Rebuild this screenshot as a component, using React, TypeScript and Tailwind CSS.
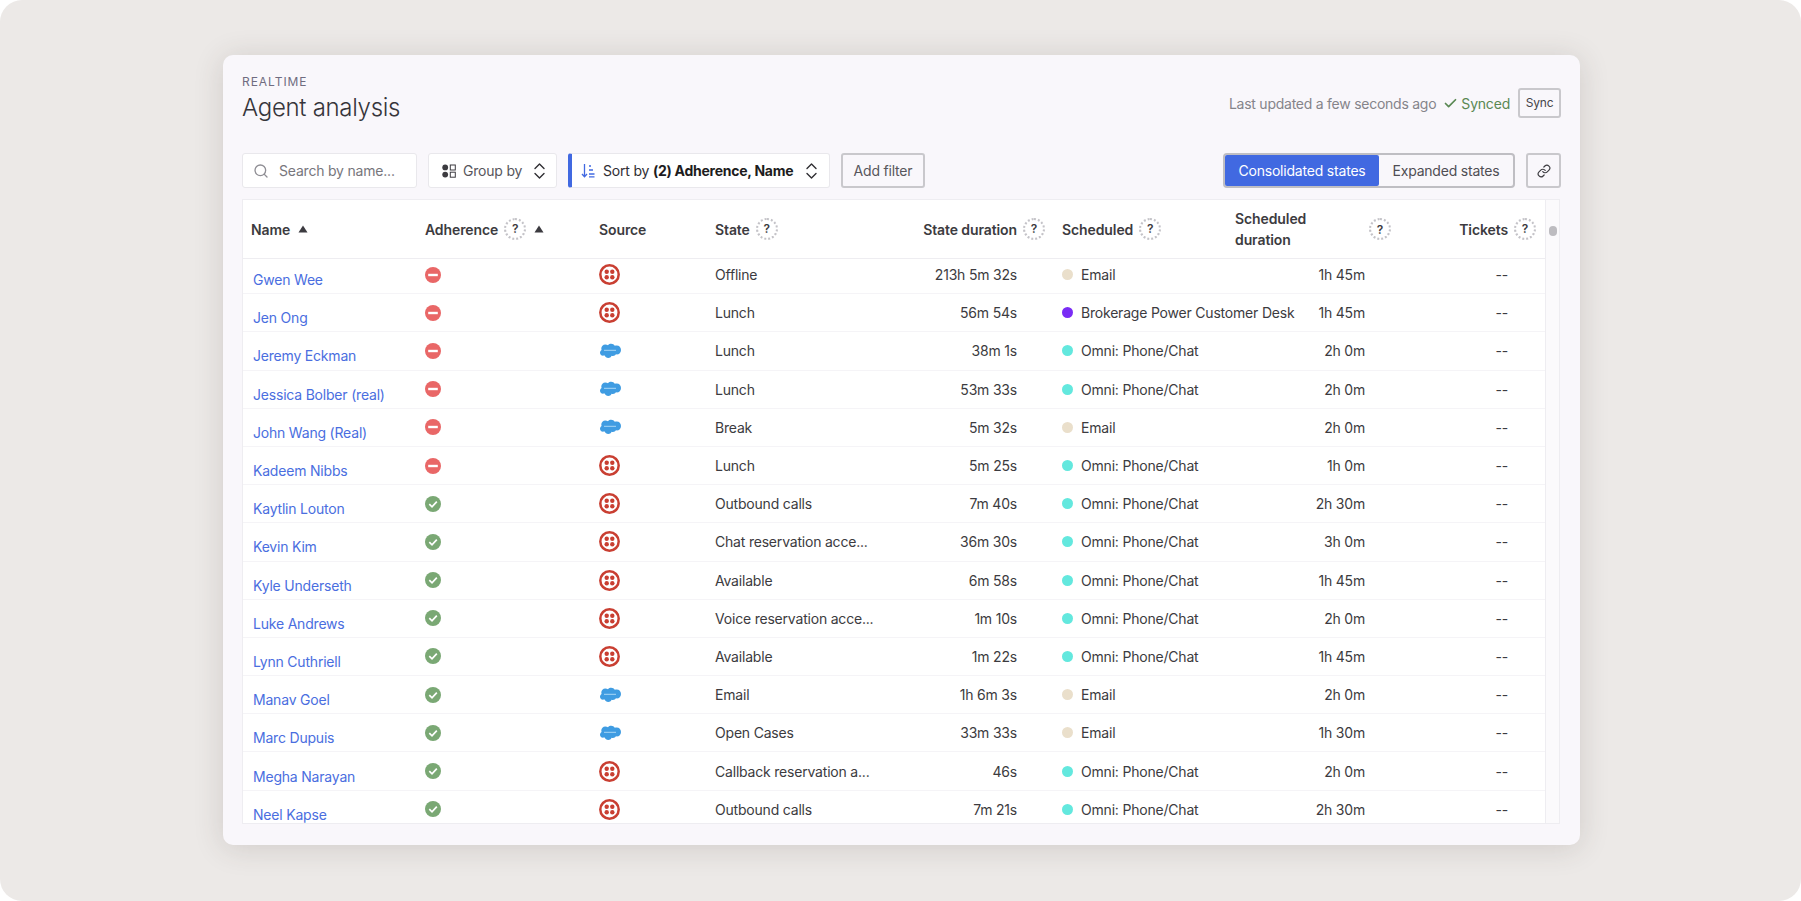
import { Search, Check, Link as LinkIcon } from "lucide-react";

type Source = "twilio" | "salesforce";
type Row = {
  name: string;
  ok: boolean;
  source: Source;
  state: string;
  duration: string;
  dot: string;
  scheduled: string;
  scheduledDuration: string;
};

const CREAM = "#eadfcb";
const TEAL = "#63e8de";
const PURPLE = "#7a2cf5";

const rows: Row[] = [
  { name: "Gwen Wee", ok: false, source: "twilio", state: "Offline", duration: "213h 5m 32s", dot: CREAM, scheduled: "Email", scheduledDuration: "1h 45m" },
  { name: "Jen Ong", ok: false, source: "twilio", state: "Lunch", duration: "56m 54s", dot: PURPLE, scheduled: "Brokerage Power Customer Desk", scheduledDuration: "1h 45m" },
  { name: "Jeremy Eckman", ok: false, source: "salesforce", state: "Lunch", duration: "38m 1s", dot: TEAL, scheduled: "Omni: Phone/Chat", scheduledDuration: "2h 0m" },
  { name: "Jessica Bolber (real)", ok: false, source: "salesforce", state: "Lunch", duration: "53m 33s", dot: TEAL, scheduled: "Omni: Phone/Chat", scheduledDuration: "2h 0m" },
  { name: "John Wang (Real)", ok: false, source: "salesforce", state: "Break", duration: "5m 32s", dot: CREAM, scheduled: "Email", scheduledDuration: "2h 0m" },
  { name: "Kadeem Nibbs", ok: false, source: "twilio", state: "Lunch", duration: "5m 25s", dot: TEAL, scheduled: "Omni: Phone/Chat", scheduledDuration: "1h 0m" },
  { name: "Kaytlin Louton", ok: true, source: "twilio", state: "Outbound calls", duration: "7m 40s", dot: TEAL, scheduled: "Omni: Phone/Chat", scheduledDuration: "2h 30m" },
  { name: "Kevin Kim", ok: true, source: "twilio", state: "Chat reservation acce...", duration: "36m 30s", dot: TEAL, scheduled: "Omni: Phone/Chat", scheduledDuration: "3h 0m" },
  { name: "Kyle Underseth", ok: true, source: "twilio", state: "Available", duration: "6m 58s", dot: TEAL, scheduled: "Omni: Phone/Chat", scheduledDuration: "1h 45m" },
  { name: "Luke Andrews", ok: true, source: "twilio", state: "Voice reservation acce...", duration: "1m 10s", dot: TEAL, scheduled: "Omni: Phone/Chat", scheduledDuration: "2h 0m" },
  { name: "Lynn Cuthriell", ok: true, source: "twilio", state: "Available", duration: "1m 22s", dot: TEAL, scheduled: "Omni: Phone/Chat", scheduledDuration: "1h 45m" },
  { name: "Manav Goel", ok: true, source: "salesforce", state: "Email", duration: "1h 6m 3s", dot: CREAM, scheduled: "Email", scheduledDuration: "2h 0m" },
  { name: "Marc Dupuis", ok: true, source: "salesforce", state: "Open Cases", duration: "33m 33s", dot: CREAM, scheduled: "Email", scheduledDuration: "1h 30m" },
  { name: "Megha Narayan", ok: true, source: "twilio", state: "Callback reservation a...", duration: "46s", dot: TEAL, scheduled: "Omni: Phone/Chat", scheduledDuration: "2h 0m" },
  { name: "Neel Kapse", ok: true, source: "twilio", state: "Outbound calls", duration: "7m 21s", dot: TEAL, scheduled: "Omni: Phone/Chat", scheduledDuration: "2h 30m" },
];

const gridCols = "grid grid-cols-[172px_175px_116px_194px_152px_174px_166px_153px] ";

function Help() {
  return (
    <span className="flex h-[22px] w-[22px] shrink-0 items-center justify-center rounded-full border-2 border-dotted border-[#c4c3c8] text-[12px] font-semibold text-[#3c3b40]">
      ?
    </span>
  );
}

function SortUp() {
  return (
    <svg width="10" height="8" viewBox="0 0 10 8" className="shrink-0">
      <path d="M5 0.5 9.500 7.500H.5Z" fill="#3c3b40" />
    </svg>
  );
}

function Updown() {
  return (
    <svg width="11" height="16" viewBox="0 0 11 16" fill="none" stroke="#2f2e33" strokeWidth="1.4" strokeLinecap="round" strokeLinejoin="round" className="shrink-0">
      <path d="M1 5.500 5.500 1 10 5.500" />
      <path d="M1 10.500 5.500 15 10 10.500" />
    </svg>
  );
}

function GroupIcon() {
  return (
    <svg width="14" height="14" viewBox="0 0 14 14" fill="none" className="shrink-0">
      <circle cx="3.200" cy="3.400" r="2.900" fill="#3c3b40" />
      <circle cx="3.200" cy="10.600" r="2.900" fill="#3c3b40" />
      <rect x="8.300" y="1" width="5" height="5" stroke="#3c3b40" />
      <rect x="8.300" y="8.200" width="5" height="5" stroke="#3c3b40" />
    </svg>
  );
}

function SortIcon() {
  return (
    <svg width="14" height="15" viewBox="0 0 14 15" fill="none" stroke="#4169e1" strokeWidth="1.300" className="shrink-0">
      <path d="M3.500 1v12.500M1 11l2.500 2.700L6 11" />
      <path d="M8 3h2M8 7h4M8 11h5.500M8 13.800h5.500" />
    </svg>
  );
}

function Adherence({ ok }: { ok: boolean }) {
  if (ok) {
    return (
      <svg width="16" height="16" viewBox="0 0 16 16">
        <circle cx="8" cy="8" r="8" fill="#7aa874" />
        <path d="M4.300 8.200 7 10.800 11.800 5.600" fill="none" stroke="#fff" strokeWidth="1.700" />
      </svg>
    );
  }
  return (
    <svg width="16" height="16" viewBox="0 0 16 16">
      <circle cx="8" cy="8" r="8" fill="#e96767" />
      <rect x="3.200" y="6.800" width="9.600" height="2.400" fill="#fff" />
    </svg>
  );
}

function SourceLogo({ source }: { source: Source }) {
  if (source === "twilio") {
    return (
      <svg width="21" height="21" viewBox="0 0 21 21">
        <circle cx="10.500" cy="10.500" r="9.200" fill="none" stroke="#c93f32" strokeWidth="2.500" />
        <circle cx="7.700" cy="7.700" r="2.200" fill="#c93f32" />
        <circle cx="13.300" cy="7.700" r="2.200" fill="#c93f32" />
        <circle cx="7.700" cy="13.300" r="2.200" fill="#c93f32" />
        <circle cx="13.300" cy="13.300" r="2.200" fill="#c93f32" />
      </svg>
    );
  }
  return (
    <svg width="22" height="16" viewBox="0 0 22 16">
      <path
        d="M9 2.200C9.800 1.300 11 .8 12.200 .8c1.500 0 2.900.8 3.600 2 .6-.3 1.300-.4 2-.4 2.400 0 4.200 2 4.200 4.500s-1.800 4.500-4.200 4.500c-.3 0-.6 0-.9-.1-.6 1-1.700 1.700-2.900 1.700-.5 0-1-.1-1.400-.3-.6 1.300-1.900 2.300-3.400 2.300-1.600 0-3-1-3.500-2.500-.2.1-.5.1-.7.1C2.400 13.100 1 11.600 1 9.800c0-1.200.6-2.300 1.600-2.800-.2-.5-.3-1-.3-1.500C2.300 3.300 4.100 1.500 6.300 1.500c1 0 2 .3 2.700.7Z"
        fill="#3f9ce2"
      />
      <rect x="5" y="6.800" width="12" height="1" fill="#a9d6f5" />
    </svg>
  );
}

export default function App() {
  return (
    <div className="h-[901px] w-[1801px] overflow-hidden bg-white font-['Inter',sans-serif] text-[14px] tracking-[-0.2px] text-[#3c3b40]">
      <div className="h-full w-full rounded-[22px] bg-[#ece9e7] pl-[223px] pt-[55px]">
        <div className="flex h-[790px] w-[1357px] flex-col rounded-[10px] bg-[#f9f7fb] px-[19px] pb-[21px] shadow-[0_3px_30px_rgba(60,50,45,0.16)]">
          {/* Header */}
          <div className="flex h-[98px] shrink-0 justify-between">
            <div className="pt-[20px]">
              <div className="text-[12px] leading-[14px] tracking-[0.08em] text-[#6f6c80]">REALTIME</div>
              <h1 className="mt-[3px] text-[24px] font-light leading-[32px] tracking-[-0.3px] text-[#36353a]">Agent analysis</h1>
            </div>
            <div className="flex items-center self-start pt-[33px]">
              <span className="tracking-[-0.25px] text-[#85848a]">Last updated a few seconds ago</span>
              <span className="ml-[7px] flex items-center gap-[3px] text-[#5a8853]">
                <Check size={15} strokeWidth={2.75} />
                Synced
              </span>
              <button className="ml-[8px] h-[30px] w-[43px] rounded-[3px] border-2 border-[#c9c8cc] text-[12px] text-[#45444a]">Sync</button>
            </div>
          </div>

          {/* Toolbar */}
          <div className="flex h-[35px] shrink-0 items-center">
            <div className="flex h-full w-[175px] items-center gap-[10px] rounded-[3px] border border-[#e9e8ec] bg-white pl-[10px] text-[#77767c]">
              <Search size={16} className="text-[#8f8e94]" />
              Search by name...
            </div>
            <div className="ml-[11px] flex h-full w-[129px] items-center gap-[7px] rounded-[3px] border border-[#e9e8ec] bg-white pl-[13px] text-[#57565c]">
              <GroupIcon />
              Group by
              <span className="ml-auto mr-[11px]"><Updown /></span>
            </div>
            <div className="ml-[11px] flex h-full w-[262px] items-center gap-[8px] rounded-[3px] border border-[#e9e8ec] border-l-[4px] border-l-[#4169e1] bg-white pl-[9px] text-[#2f2e33]">
              <SortIcon />
              <span className="whitespace-nowrap">Sort by <b className="font-bold tracking-[-0.25px] text-[#1d1c20]">(2) Adherence, Name</b></span>
              <span className="ml-auto mr-[12px]"><Updown /></span>
            </div>
            <button className="ml-[11px] h-full w-[84px] rounded-[3px] border-2 border-[#c9c8cc] text-[#57565c]">Add filter</button>
            <div className="ml-auto flex h-full w-[292px] rounded-[4px] border-2 border-[#bfbec3]">
              <div className="flex w-[154px] items-center justify-center rounded-[2px] bg-[#4169e1] text-white">Consolidated states</div>
              <div className="flex flex-1 items-center justify-center text-[#4f4e54]">Expanded states</div>
            </div>
            <button className="ml-[11px] flex h-full w-[35px] items-center justify-center rounded-[3px] border-2 border-[#c9c8cc] text-[#3c3b40]">
              <LinkIcon size={14} />
            </button>
          </div>

          {/* Table */}
          <div className="mr-[1px] mt-[11px] flex min-h-0 flex-1 border border-[#eeedf1] bg-white">
            <div className="flex min-w-0 flex-1 flex-col overflow-hidden">
              <div className={gridCols + "h-[59px] shrink-0 items-center border-b border-[#eeedf1] font-semibold tracking-[-0.1px] text-[#3c3b40]"}>
                <div className="flex items-center gap-[8px] pl-[8px]">Name <SortUp /></div>
                <div className="flex items-center gap-[6px] pl-[10px]">Adherence <Help /> <span className="ml-[2px]"><SortUp /></span></div>
                <div className="pl-[9px]">Source</div>
                <div className="flex items-center gap-[6px] pl-[9px]">State <Help /></div>
                <div className="flex items-center justify-end gap-[6px] whitespace-nowrap pr-[7px]">State duration <Help /></div>
                <div className="flex items-center gap-[6px] pl-[10px]">Scheduled <Help /></div>
                <div className="flex items-center justify-between pl-[9px] pr-[1px] leading-[21px]">
                  <span>Scheduled<br />duration</span>
                  <Help />
                </div>
                <div className="flex items-center justify-end gap-[6px] pr-[9px]">Tickets <Help /></div>
              </div>
              <div className="min-h-0 flex-1 overflow-hidden">
                <div className="-mt-[3px]">
                  {rows.map((r) => (
                    <div key={r.name} className={gridCols + "h-[38.2px] items-center border-b border-[#f5f4f7]"}>
                      <a className="pl-[10px] pt-[10px] text-[#4a6ee0]">{r.name}</a>
                      <div className="pl-[10px]"><Adherence ok={r.ok} /></div>
                      <div className="pl-[9px]"><SourceLogo source={r.source} /></div>
                      <div className="whitespace-nowrap pl-[9px]">{r.state}</div>
                      <div className="whitespace-nowrap pr-[35px] text-right">{r.duration}</div>
                      <div className="flex items-center whitespace-nowrap pl-[10px]">
                        <span className="mr-[8px] h-[11px] w-[11px] shrink-0 rounded-full" style={{ backgroundColor: r.dot }} />
                        {r.scheduled}
                      </div>
                      <div className="pr-[27px] text-right">{r.scheduledDuration}</div>
                      <div className="pr-[37px] text-right">--</div>
                    </div>
                  ))}
                </div>
              </div>
            </div>
            <div className="w-[14px] shrink-0 border-l border-[#eeedf1] bg-[#fbfafc] pt-[26px]">
              <div className="mx-auto h-[10px] w-[8px] rounded-full bg-[#bdbcc0]" />
            </div>
          </div>
        </div>
      </div>
    </div>
  );
}
